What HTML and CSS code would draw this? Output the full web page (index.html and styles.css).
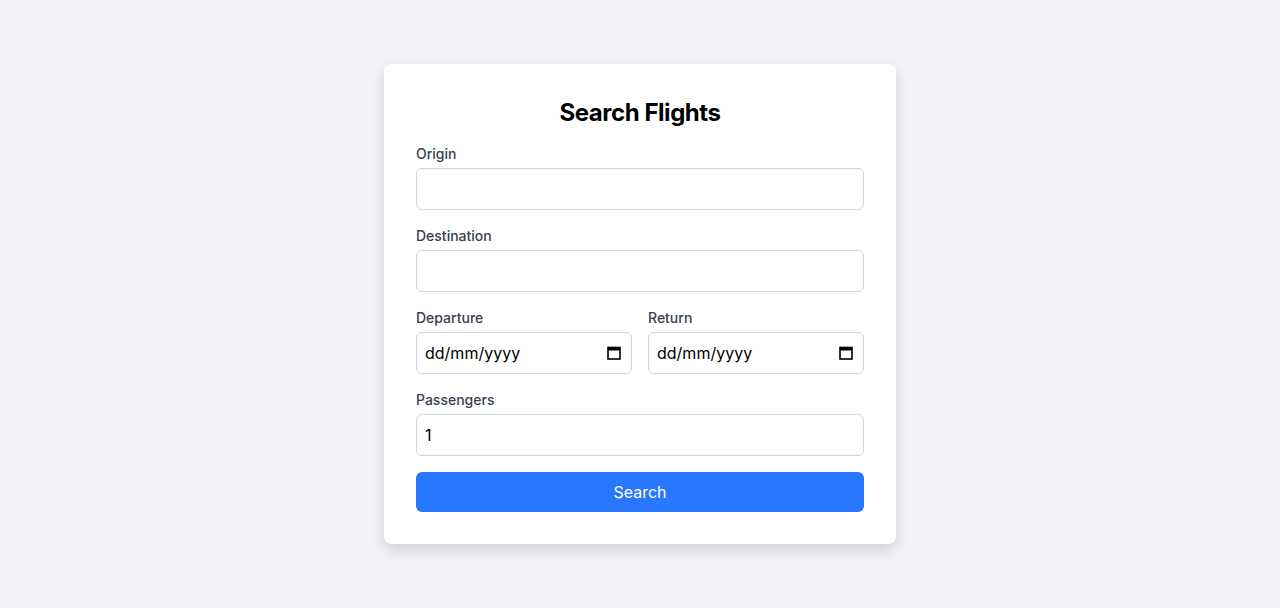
FILE: index.html
```html
<!DOCTYPE html>
<html lang="en">
<head>
<meta charset="utf-8">
<title>Search Flights</title>
<link rel="stylesheet" href="styles.css">
</head>
<body>
<main class="page">
  <form class="card">
    <h1 class="title">Search Flights</h1>
    <div class="field">
      <label class="label" for="origin">Origin</label>
      <input class="input" id="origin" type="text">
    </div>
    <div class="field">
      <label class="label" for="dest">Destination</label>
      <input class="input" id="dest" type="text">
    </div>
    <div class="row">
      <div class="field">
        <label class="label" for="dep">Departure</label>
        <div class="date-wrap">
          <input class="input date" id="dep" type="text" placeholder="dd/mm/yyyy">
          <svg class="cal" width="14" height="14" viewBox="0 0 14 14"><rect x="1" y="1.5" width="12" height="11.5" fill="none" stroke="#000" stroke-width="1.6"/><rect x="1" y="1.5" width="12" height="3" fill="#000"/></svg>
        </div>
      </div>
      <div class="field">
        <label class="label" for="ret">Return</label>
        <div class="date-wrap">
          <input class="input date" id="ret" type="text" placeholder="dd/mm/yyyy">
          <svg class="cal" width="14" height="14" viewBox="0 0 14 14"><rect x="1" y="1.5" width="12" height="11.5" fill="none" stroke="#000" stroke-width="1.6"/><rect x="1" y="1.5" width="12" height="3" fill="#000"/></svg>
        </div>
      </div>
    </div>
    <div class="field">
      <label class="label" for="pax">Passengers</label>
      <input class="input" id="pax" type="text" value="1">
    </div>
    <button class="btn" type="button">Search</button>
  </form>
</main>
</body>
</html>
```
FILE: styles.css
```css
* { box-sizing: border-box; }
html, body { margin: 0; padding: 0; }
body {
  background: #f0f2f5;
  font-family: Inter, "Liberation Sans", sans-serif;
  color: #000;
}
.page {
  min-height: 608px;
  display: flex;
  justify-content: center;
  padding-top: 64px;
}
.card {
  width: 512px;
  height: 480px;
  background: #fff;
  border-radius: 8px;
  padding: 32px;
  box-shadow: 0 6px 14px rgba(0, 0, 0, 0.13);
  display: flex;
  flex-direction: column;
  gap: 16px;
}
.title {
  margin: 0;
  font-size: 24px;
  line-height: 32px;
  padding-top: 1px;
  margin-bottom: -1px;
  font-weight: 700;
  text-align: center;
  letter-spacing: -0.45px;
}
.field {
  display: flex;
  flex-direction: column;
  gap: 4px;
  min-width: 0;
}
.row {
  display: grid;
  grid-template-columns: 1fr 1fr;
  gap: 16px;
}
.label {
  font-size: 14px;
  line-height: 20px;
  font-weight: 500;
  color: #374151;
}
.input {
  width: 100%;
  height: 42px;
  border: 1px solid #cfd3db;
  border-radius: 6px;
  padding: 0 8px;
  font-family: Inter, "Liberation Sans", sans-serif;
  font-size: 16px;
  color: #000;
  background: #fff;
  outline: none;
}
.date-wrap {
  position: relative;
}
.date::placeholder {
  color: #000;
  opacity: 1;
}
.cal {
  position: absolute;
  right: 11px;
  top: 14px;
  pointer-events: none;
}
.btn {
  height: 40px;
  border: none;
  border-radius: 6px;
  background: #2977ff;
  color: #fff;
  font-family: Inter, "Liberation Sans", sans-serif;
  font-size: 16px;
  font-weight: 400;
}
```
